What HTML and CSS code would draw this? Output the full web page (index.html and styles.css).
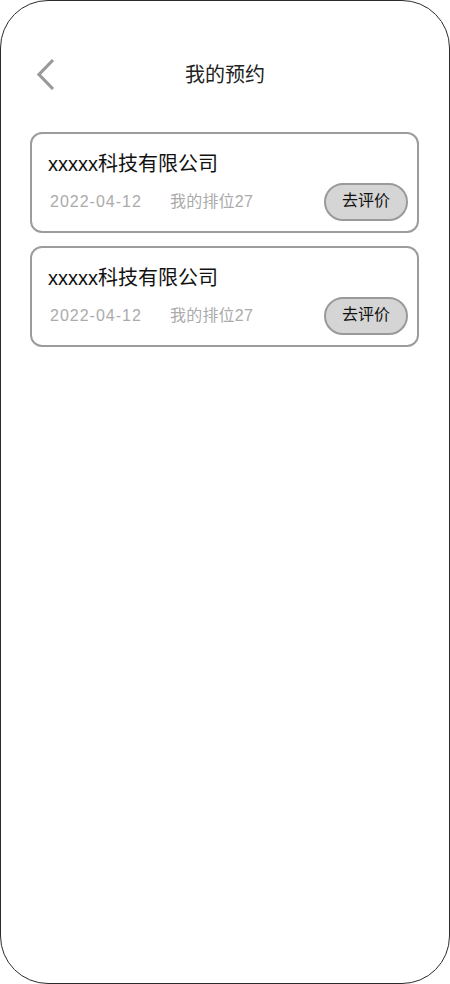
FILE: index.html
```html
<!DOCTYPE html>
<html lang="zh-CN">
<head>
<meta charset="utf-8">
<title>我的预约</title>
<link rel="stylesheet" href="styles.css">
</head>
<body>
<div class="phone">
  <header class="header">
    <svg class="back" width="24" height="34" viewBox="0 0 24 34" aria-hidden="true">
      <path d="M18 2 L4 16.5 L18 31" fill="none" stroke="#999" stroke-width="3.2"/>
    </svg>
    <h1 class="title">我的预约</h1>
  </header>
  <main class="list">
    <div class="card">
      <div class="card-name">xxxxx科技有限公司</div>
      <div class="card-row">
        <span class="date">2022-04-12</span>
        <span class="rank">我的排位27</span>
        <button class="rate">去评价</button>
      </div>
    </div>
    <div class="card">
      <div class="card-name">xxxxx科技有限公司</div>
      <div class="card-row">
        <span class="date">2022-04-12</span>
        <span class="rank">我的排位27</span>
        <button class="rate">去评价</button>
      </div>
    </div>
  </main>
</div>
</body>
</html>
```
FILE: styles.css
```css
* { box-sizing: border-box; }
html, body {
  margin: 0;
  padding: 0;
  background: #fff;
  font-family: "Liberation Sans", "Noto Sans CJK SC", sans-serif;
}
.phone {
  width: 450px;
  height: 984px;
  border: 1px solid #2b2b2b;
  border-radius: 48px;
  background: #fff;
  padding-top: 48px;
}
.header {
  height: 52px;
  display: flex;
  align-items: center;
  position: relative;
  padding-left: 34px;
}
.back { display: block; }
.title {
  position: absolute;
  left: 0;
  right: 0;
  top: 0;
  bottom: 0;
  margin: 0;
  display: flex;
  align-items: center;
  justify-content: center;
  font-size: 20px;
  line-height: 26px;
  font-weight: normal;
  color: #222;
  pointer-events: none;
}
.list {
  padding: 31px 30px 0 29px;
  display: flex;
  flex-direction: column;
  gap: 13px;
}
.card {
  height: 101px;
  border: 2px solid #9c9c9c;
  border-radius: 12px;
  padding: 17px 9px 0 16px;
}
.card-name {
  font-size: 20px;
  line-height: 26px;
  color: #111;
}
.card-row {
  display: flex;
  align-items: center;
  margin-top: 6px;
  height: 38px;
}
.date, .rank {
  font-size: 16px;
  line-height: 20px;
  height: 20px;
  color: #ababab;
  margin-top: -1px;
}
.date { margin-left: 2px; width: 120px; letter-spacing: 1px; }
.rank { letter-spacing: 0.2px; }
.rate {
  margin-left: auto;
  width: 84px;
  height: 38px;
  border: 2px solid #9a9a9a;
  border-radius: 19px;
  background: #d5d5d5;
  font-family: inherit;
  font-size: 16px;
  line-height: 20px;
  color: #111;
  padding: 0 0 2px 0;
}
```
